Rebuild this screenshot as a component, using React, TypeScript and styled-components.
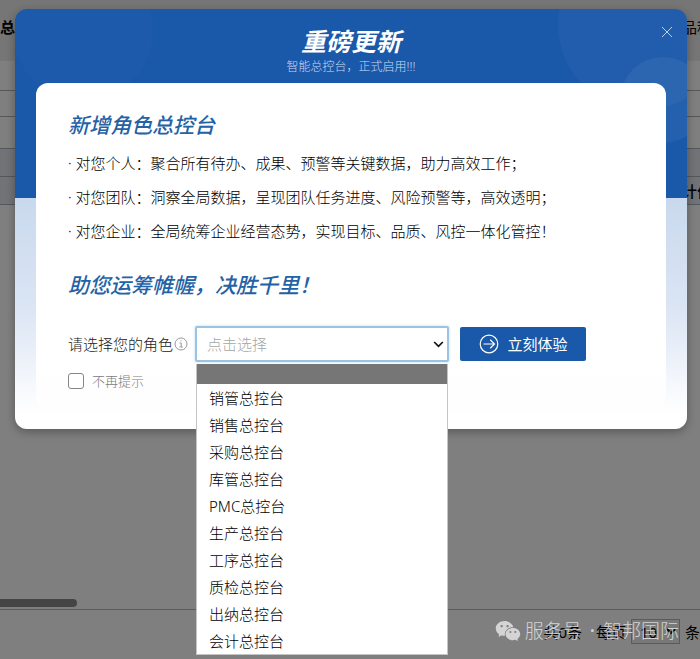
import React, { useState } from "react";
import styled, { createGlobalStyle, css } from "styled-components";
import { AiFillWechat } from "react-icons/ai";

const GlobalStyle = createGlobalStyle`
  * { box-sizing: border-box; }
  body {
    margin: 0;
    overflow: hidden;
    color: #000;
    background: #fff;
    font: 15px/20px "Noto Sans", "Noto Sans CJK SC", sans-serif;
  }
  button, input, select { font: inherit; }
`;

const Screen = styled.div`
  position: relative;
  min-height: 100vh;
  display: flex;
  flex-direction: column;
`;

/* Page behind the dialog */

const PageRow = styled.div<{ $height: number; $tone?: string; $ruled?: boolean }>`
  display: flex;
  justify-content: space-between;
  align-items: center;
  height: ${(p) => p.$height}px;
  background: ${(p) => p.$tone ?? "transparent"};
  ${(p) => p.$ruled && css`border-bottom: 1px solid #a9b0b8;`}
`;

const PageHeader = styled(PageRow)`
  padding-bottom: 7px;
`;

const PageTitle = styled.h1`
  margin: 0;
  font-size: 15px;
  font-weight: 700;
`;

const EdgeText = styled.span<{ $bold?: boolean }>`
  width: 18px;
  margin-left: auto;
  overflow: hidden;
  white-space: nowrap;
  font-weight: ${(p) => (p.$bold ? 500 : 400)};
`;

const PageBody = styled.div`
  flex: 1;
  display: flex;
  align-items: flex-end;
`;

const ScrollThumb = styled.div`
  width: 11%;
  height: 8px;
  margin-bottom: 2px;
  border-radius: 0 4px 4px 0;
  background: #8a8a8a;
`;

const Pager = styled.footer`
  display: flex;
  justify-content: flex-end;
  align-items: center;
  height: 50px;
  padding-bottom: 6px;
  border-top: 1px solid #b8b8b8;
  gap: 5px;
`;

const PagerCount = styled.span`
  margin-right: 9px;
`;

const PagerSelect = styled.select`
  width: 49px;
  height: 25px;
  padding-left: 4px;
  border: 1px solid #b4b4b4;
  background: #f2f2f2;
`;

const PagerUnit = styled.span`
  width: 15px;
`;

/* Dialog */

const Backdrop = styled.div`
  position: absolute;
  inset: 0;
  padding: 9px 13px 0 15px;
  background: rgba(0, 0, 0, 0.5);
`;

const Dialog = styled.section`
  position: relative;
  padding: 0 21px 21px;
  border-radius: 12px;
  background: linear-gradient(#1a58aa 189px, #c9d9ed 189px, #dbe5f4 300px, #fff 405px);
  box-shadow: 0 3px 10px rgba(0, 0, 0, 0.3);
`;

const Decoration = styled.svg<{ $side: "left" | "right" }>`
  position: absolute;
  top: 0;
  ${(p) => p.$side}: 0;
  border-radius: 12px;
`;

const DialogHeader = styled.header`
  position: relative;
  display: flex;
  flex-direction: column;
  align-items: center;
  height: 74px;
  padding-top: 16px;
  color: #fff;
`;

const DialogTitle = styled.h2`
  margin: 0;
  font-size: 25px;
  line-height: 32px;
  font-weight: 700;
  font-style: italic;
`;

const Subtitle = styled.p`
  margin: 0;
  font-size: 12px;
  line-height: 20px;
  font-weight: 300;
  color: #c9daf2;
`;

const CloseButton = styled.button`
  position: absolute;
  top: 15px;
  right: -9px;
  display: flex;
  padding: 2px;
  border: 0;
  background: none;
  color: #b9cfec;
`;

const Card = styled.div`
  position: relative;
  padding: 28px 32px 17px;
  border-radius: 12px;
  background: linear-gradient(#fff 88%, rgba(255, 255, 255, 0.8));
`;

const SectionTitle = styled.h3`
  margin: 0;
  font-size: 21px;
  line-height: 28px;
  font-weight: 500;
  font-style: italic;
  color: #2462a6;
`;

const Benefits = styled.ul`
  margin: 7px 0 23px;
  padding: 0;
  list-style: none;
  font-weight: 300;
  line-height: 34px;
  white-space: nowrap;
`;

const Benefit = styled.li`
  &::before { content: "· "; }
`;

const FormRow = styled.div`
  display: flex;
  align-items: center;
  margin-top: 27px;
`;

const RoleLabel = styled.label`
  display: flex;
  align-items: center;
  gap: 1px;
  margin-right: 7px;
  font-weight: 300;
  white-space: nowrap;
  color: #222;
`;

const RoleField = styled.div`
  position: relative;
  flex: 0 1 254px;
`;

const RoleSelect = styled.select`
  display: block;
  appearance: none;
  width: 100%;
  height: 36px;
  padding: 0 32px 0 10px;
  border: 2px solid #9dc3e0;
  border-radius: 2px;
  outline: none;
  background: #fff;
  box-shadow: 0 0 3px #b5dcf5;
  font-weight: 300;
  color: #a6a6a6;
`;

const Chevron = styled.svg`
  position: absolute;
  top: 14px;
  right: 5px;
  pointer-events: none;
`;

const Menu = styled.ul`
  position: absolute;
  top: 38px;
  left: 1px;
  right: 1px;
  margin: 0;
  padding: 0;
  list-style: none;
  border: 1px solid #c4c4c4;
  border-top: 0;
  background: #fff;
`;

const BlankOption = styled.li`
  height: 20px;
  background: #767676;
`;

const RoleOption = styled.button`
  display: block;
  width: 100%;
  height: 27px;
  padding: 0 12px;
  border: 0;
  background: none;
  color: #000;
  font-weight: 300;
  text-align: left;
`;

const StartButton = styled.button`
  display: flex;
  justify-content: center;
  align-items: center;
  gap: 9px;
  flex: 0 0 126px;
  height: 34px;
  margin-left: 11px;
  border: 0;
  border-radius: 2px;
  background: #1a58aa;
  color: #fff;
`;

const Remember = styled.label`
  display: flex;
  align-items: center;
  gap: 8px;
  width: max-content;
  margin-top: 9px;
  font-size: 13px;
  font-weight: 300;
  color: #7c7c7c;
`;

const Checkbox = styled.input`
  appearance: none;
  width: 16px;
  height: 16px;
  margin: 0;
  border: 1px solid #858585;
  border-radius: 3px;
  background: #fff;
  &:checked { background: #1a58aa; }
`;

const Watermark = styled.div`
  position: absolute;
  right: 21px;
  bottom: 14px;
  display: flex;
  align-items: center;
  gap: 3px;
  font-size: 19px;
  line-height: 28px;
  font-weight: 300;
  white-space: nowrap;
  color: #d4d4d4;
`;

const WatermarkDot = styled.span`
  padding: 0 5px;
  font-weight: 500;
`;

const benefits = [
  "对您个人：聚合所有待办、成果、预警等关键数据，助力高效工作；",
  "对您团队：洞察全局数据，呈现团队任务进度、风险预警等，高效透明；",
  "对您企业：全局统筹企业经营态势，实现目标、品质、风控一体化管控！",
];

const roles = [
  "销管总控台", "销售总控台", "采购总控台", "库管总控台", "PMC总控台",
  "生产总控台", "工序总控台", "质检总控台", "出纳总控台", "会计总控台",
];

export default function App() {
  const [role, setRole] = useState("");
  return (
    <Screen>
      <GlobalStyle />
      <PageHeader $height={61} $tone="#ececec">
        <PageTitle>总</PageTitle>
        <EdgeText>品种</EdgeText>
      </PageHeader>
      <PageRow $height={30} $ruled />
      <PageRow $height={26} $ruled />
      <PageRow $height={32} $ruled />
      <PageRow $height={28} $tone="#e2e6ec" $ruled />
      <PageRow $height={28} $tone="#e2e6ec" $ruled>
        <EdgeText $bold>计价</EdgeText>
      </PageRow>
      <PageBody>
        <ScrollThumb />
      </PageBody>
      <Pager>
        <PagerCount>共0条</PagerCount>
        <label htmlFor="page-size">每页</label>
        <PagerSelect id="page-size" defaultValue="10">
          <option>10</option>
        </PagerSelect>
        <PagerUnit>条</PagerUnit>
      </Pager>

      <Backdrop>
        <Dialog role="dialog" aria-labelledby="dialog-title">
          <Decoration $side="left" width="150" height="74" aria-hidden="true">
            <circle cx="68" cy="22" r="70" fill="#fff" opacity="0.015" />
          </Decoration>
          <Decoration $side="right" width="140" height="150" aria-hidden="true">
            <circle cx="96" cy="16" r="85" fill="#fff" opacity="0.03" />
            <circle cx="116" cy="91" r="43" fill="#fff" opacity="0.05" />
          </Decoration>
          <DialogHeader>
            <DialogTitle id="dialog-title">重磅更新</DialogTitle>
            <Subtitle>智能总控台，正式启用!!!</Subtitle>
            <CloseButton aria-label="关闭">
              <svg width="12" height="12" viewBox="0 0 12 12" stroke="currentColor">
                <path d="M1 1l10 10M11 1L1 11" />
              </svg>
            </CloseButton>
          </DialogHeader>
          <Card>
            <SectionTitle>新增角色总控台</SectionTitle>
            <Benefits>
              {benefits.map((text) => <Benefit key={text}>{text}</Benefit>)}
            </Benefits>
            <SectionTitle>助您运筹帷幄，决胜千里！</SectionTitle>
            <FormRow>
              <RoleLabel htmlFor="role">
                请选择您的角色
                <svg width="14" height="14" viewBox="0 0 14 14" fill="none" stroke="#999" aria-hidden="true">
                  <circle cx="7" cy="7" r="6" />
                  <path d="M5.5 6h1.7v4M5.5 10h3.4M6.5 3.8h1" />
                </svg>
              </RoleLabel>
              <RoleField>
                <RoleSelect id="role" value={role} onChange={(e) => setRole(e.target.value)}>
                  <option value="">点击选择</option>
                  {roles.map((name) => <option key={name}>{name}</option>)}
                </RoleSelect>
                <Chevron width="11" height="9" viewBox="0 0 11 9" fill="none" stroke="#111" strokeWidth="1.7">
                  <path d="M1.2 2l4.3 4.4L9.8 2" />
                </Chevron>
                <Menu>
                  <BlankOption />
                  {roles.map((name) => (
                    <li key={name}>
                      <RoleOption type="button" onClick={() => setRole(name)}>{name}</RoleOption>
                    </li>
                  ))}
                </Menu>
              </RoleField>
              <StartButton>
                <svg width="20" height="20" viewBox="0 0 20 20" fill="none" stroke="currentColor" strokeWidth="1.2" aria-hidden="true">
                  <circle cx="10" cy="10" r="8.8" />
                  <path d="M4.5 10h11M11.2 5.8l4.3 4.2-4.3 4.2" />
                </svg>
                立刻体验
              </StartButton>
            </FormRow>
            <Remember>
              <Checkbox type="checkbox" />
              不再提示
            </Remember>
          </Card>
        </Dialog>
      </Backdrop>

      <Watermark>
        <AiFillWechat size={28} />
        <span>服务号</span>
        <WatermarkDot>·</WatermarkDot>
        <span>智邦国际</span>
      </Watermark>
    </Screen>
  );
}
